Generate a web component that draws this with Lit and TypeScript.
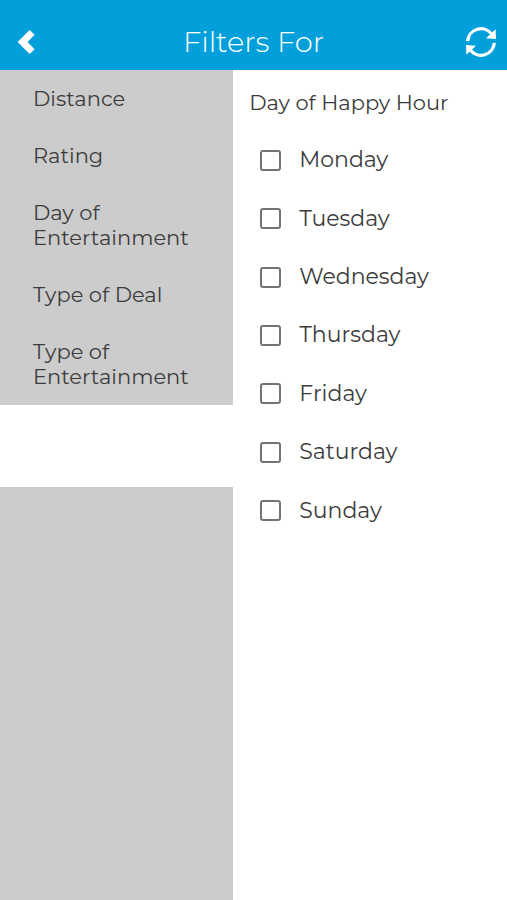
import { LitElement, html, css, svg } from "lit";
import { customElement, state } from "lit/decorators.js";
import { classMap } from "lit/directives/class-map.js";

const categories = [
  "Distance",
  "Rating",
  "Day of Entertainment",
  "Type of Deal",
  "Type of Entertainment",
];

const days = ["Monday", "Tuesday", "Wednesday", "Thursday", "Friday", "Saturday", "Sunday"];

// One half of the refresh symbol; the other half is the same shape turned by 180 degrees.
const refreshHalf = () => svg`
  <path class="arc" d="M2.7 15.2A13.3 13.3 0 0 1 26.8 8.3" />
  <path class="head" d="M30.6 3.2L31 12.9L21 12.2Z" />
`;

@customElement("app-root")
export class AppRoot extends LitElement {
  @state() private checked = new Set<string>();

  static styles = css`
    :host {
      display: flex;
      flex-direction: column;
      min-height: 100vh;
      background: #fff;
      color: #3c3c3c;
      font-family: Montserrat, Inter, sans-serif;
    }
    * {
      box-sizing: border-box;
    }
    button {
      border: 0;
      padding: 0;
      background: none;
      color: inherit;
      font: inherit;
      cursor: pointer;
    }
    .bar {
      display: grid;
      grid-template-columns: 52px 1fr 52px;
      align-items: center;
      height: 70px;
      padding-top: 14px;
      background: #029fda;
      color: #fff;
    }
    .title {
      margin: 0;
      text-align: center;
      font-size: 29px;
      line-height: 36px;
      font-weight: 300;
    }
    .icon {
      display: grid;
      place-items: center;
      height: 40px;
    }
    .icon svg {
      display: block;
    }
    .arc {
      fill: none;
      stroke: currentColor;
      stroke-width: 3.3;
    }
    .head {
      fill: currentColor;
    }
    .body {
      display: flex;
      flex: 1;
    }
    .side {
      display: flex;
      flex-direction: column;
      width: 46%;
      background: #ccc;
    }
    .category {
      padding: 16px 33px;
      text-align: left;
      font-size: 21px;
      line-height: 25px;
    }
    .selected {
      height: 82px;
      background: #fff;
    }
    .options {
      flex: 1;
      min-width: 0;
      padding: 20px 16px;
    }
    .heading {
      margin: 0 0 16px;
      font-size: 21px;
      line-height: 25px;
      font-weight: 400;
    }
    .days {
      display: grid;
      grid-auto-rows: 1fr;
      height: 409px;
    }
    .day {
      display: flex;
      align-items: center;
      gap: 18px;
      padding-left: 11px;
      font-size: 22px;
      line-height: 28px;
    }
    .box {
      appearance: none;
      flex: none;
      width: 21px;
      height: 21px;
      margin: 0;
      border: 2px solid #737373;
      border-radius: 3px;
    }
    .box:checked {
      background: #029fda;
    }
  `;

  private toggle(day: string) {
    const next = new Set(this.checked);
    if (!next.delete(day)) next.add(day);
    this.checked = next;
  }

  render() {
    return html`
      <header class="bar">
        <button class="icon" aria-label="Back">
          <svg width="18" height="24" viewBox="0 0 18 24" aria-hidden="true">
            <path class="head" d="M12.6 0L17.6 4.8L10.6 12L17.6 19.2L12.6 24L0.6 12Z" />
          </svg>
        </button>
        <h1 class="title">Filters For</h1>
        <button class="icon" aria-label="Reset filters" @click=${() => (this.checked = new Set())}>
          <svg width="32" height="32" viewBox="0 0 32 32" aria-hidden="true">
            <g>${refreshHalf()}</g>
            <g transform="rotate(180 16 16)">${refreshHalf()}</g>
          </svg>
        </button>
      </header>
      <div class="body">
        <nav class="side">
          ${categories.map((name) => html`<button class="category">${name}</button>`)}
          <button
            class=${classMap({ category: true, selected: true })}
            aria-labelledby="heading"
            aria-current="true"
          ></button>
        </nav>
        <main class="options">
          <h2 class="heading" id="heading">Day of Happy Hour</h2>
          <div class="days" role="group" aria-labelledby="heading">
            ${days.map(
              (day) => html`
                <label class="day">
                  <input
                    class="box"
                    type="checkbox"
                    .checked=${this.checked.has(day)}
                    @change=${() => this.toggle(day)}
                  />
                  ${day}
                </label>
              `
            )}
          </div>
        </main>
      </div>
    `;
  }
}
